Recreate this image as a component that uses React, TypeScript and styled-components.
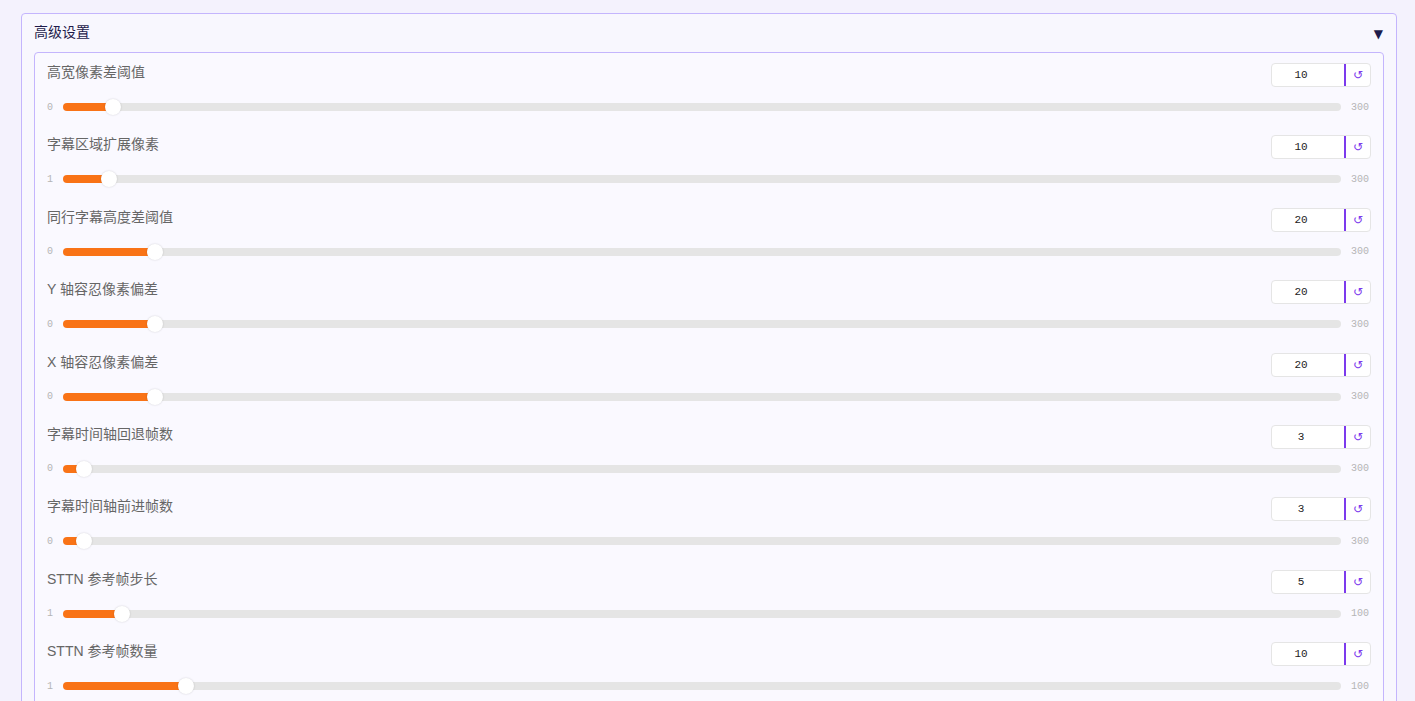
import React, { useState } from 'react';
import styled, { createGlobalStyle } from 'styled-components';

const GlobalStyle = createGlobalStyle`
    html, body {
        margin: 0;
        padding: 0;
        background: #f4f2fd;
        font-family: 'Liberation Sans', 'Noto Sans CJK SC', sans-serif;
    }
`;

interface SliderSetting {
    label: string;
    value: number;
    min: number;
    max: number;
}

const defaults: SliderSetting[] = [
    { label: '高宽像素差阈值', value: 10, min: 0, max: 300 },
    { label: '字幕区域扩展像素', value: 10, min: 1, max: 300 },
    { label: '同行字幕高度差阈值', value: 20, min: 0, max: 300 },
    { label: 'Y 轴容忍像素偏差', value: 20, min: 0, max: 300 },
    { label: 'X 轴容忍像素偏差', value: 20, min: 0, max: 300 },
    { label: '字幕时间轴回退帧数', value: 3, min: 0, max: 300 },
    { label: '字幕时间轴前进帧数', value: 3, min: 0, max: 300 },
    { label: 'STTN 参考帧步长', value: 5, min: 1, max: 100 },
    { label: 'STTN 参考帧数量', value: 10, min: 1, max: 100 },
];

const SliderRow = ({ setting }: { setting: SliderSetting }) => {
    const [value, setValue] = useState(setting.value);
    const ratio = (value - setting.min) / (setting.max - setting.min);

    const handleInput = (e: React.ChangeEvent<HTMLInputElement>) => {
        const next = Number(e.target.value);
        if (!Number.isNaN(next)) setValue(Math.min(setting.max, Math.max(setting.min, next)));
    };

    return (
        <Row>
            <RowHead>
                <Label>{setting.label}</Label>
                <NumberBox>
                    <NumberInput type="number" value={value} min={setting.min} max={setting.max} onChange={handleInput} />
                    <ResetButton onClick={() => setValue(setting.value)}>↺</ResetButton>
                </NumberBox>
            </RowHead>
            <RangeLine>
                <MinText>{setting.min}</MinText>
                <Range
                    type="range"
                    min={setting.min}
                    max={setting.max}
                    value={value}
                    onChange={handleInput}
                    style={{ '--fill': `calc(8px + ${ratio} * (100% - 16px))` } as React.CSSProperties}
                />
                <MaxText>{setting.max}</MaxText>
            </RangeLine>
        </Row>
    );
};

export default function App() {
    const [open, setOpen] = useState(true);

    return (
        <Page>
            <GlobalStyle />
            <Accordion>
                <AccordionHead onClick={() => setOpen(!open)}>
                    <Title>高级设置</Title>
                    <Caret>{open ? '▼' : '▶'}</Caret>
                </AccordionHead>
                {open && (
                    <Panel>
                        {defaults.map((s) => (
                            <SliderRow key={s.label} setting={s} />
                        ))}
                    </Panel>
                )}
            </Accordion>
        </Page>
    );
}

const Page = styled.div`
    padding: 13px 18px 0 21px;
    min-height: 100vh;
    box-sizing: border-box;
`;

const Accordion = styled.div`
    border: 1px solid #c4b5fd;
    border-radius: 4px;
    background: #f8f7fe;
    padding: 0 12px;
`;

const AccordionHead = styled.div`
    height: 38px;
    display: flex;
    align-items: center;
    justify-content: space-between;
    cursor: pointer;
`;

const Title = styled.span`
    font-size: 14px;
    line-height: 18px;
    margin-top: -2px;
    color: #1e1b4b;
`;

const Caret = styled.span`
    font-family: 'DejaVu Sans', sans-serif;
    font-size: 12px;
    color: #1e1b4b;
    margin-right: 1px;
    margin-top: 1px;
`;

const Panel = styled.div`
    border: 1px solid #c4b5fd;
    border-radius: 4px;
    background: #faf9ff;
`;

const Row = styled.div`
    height: 72.375px;
    box-sizing: border-box;
    padding: 10px 12px 0;
`;

const RowHead = styled.div`
    display: flex;
    justify-content: space-between;
    align-items: flex-start;
`;

const Label = styled.span`
    font-size: 14px;
    line-height: 18px;
    color: #666;
`;

const NumberBox = styled.div`
    display: flex;
    width: 100px;
    height: 24px;
    box-sizing: border-box;
    border: 1px solid #e5e5e5;
    border-radius: 4px;
    background: #fff;
    overflow: hidden;
`;

const NumberInput = styled.input`
    width: 72px;
    box-sizing: border-box;
    border: none;
    outline: none;
    padding: 0 14px 0 0;
    text-align: center;
    font-family: 'Liberation Mono', monospace;
    font-size: 11px;
    color: #222;
    background: transparent;
    -moz-appearance: textfield;
    &::-webkit-outer-spin-button,
    &::-webkit-inner-spin-button {
        -webkit-appearance: none;
        margin: 0;
    }
`;

const ResetButton = styled.button`
    flex: 1;
    border: none;
    border-left: 2px solid #7c3aed;
    background: transparent;
    color: #7c3aed;
    font-family: 'DejaVu Sans', sans-serif;
    font-size: 12px;
    padding: 0;
    cursor: pointer;
`;

const RangeLine = styled.div`
    display: flex;
    align-items: center;
    height: 16px;
    margin-top: 12px;
`;

const MinText = styled.span`
    width: 16px;
    font-family: 'Liberation Mono', monospace;
    font-size: 10px;
    color: #b5b5b5;
`;

const MaxText = styled.span`
    width: 30px;
    box-sizing: border-box;
    padding-left: 10px;
    font-family: 'Liberation Mono', monospace;
    font-size: 10px;
    color: #b5b5b5;
`;

const Range = styled.input`
    flex: 1;
    min-width: 0;
    height: 16px;
    margin: 0;
    -webkit-appearance: none;
    appearance: none;
    background: transparent;
    cursor: pointer;
    &::-webkit-slider-runnable-track {
        height: 8px;
        border-radius: 4px;
        background: linear-gradient(to right, #f97316 var(--fill), #e5e5e5 var(--fill));
    }
    &::-webkit-slider-thumb {
        -webkit-appearance: none;
        width: 16px;
        height: 16px;
        margin-top: -4px;
        border-radius: 50%;
        background: #fff;
        box-shadow: 0 0 2px rgba(0, 0, 0, 0.18);
    }
`;
